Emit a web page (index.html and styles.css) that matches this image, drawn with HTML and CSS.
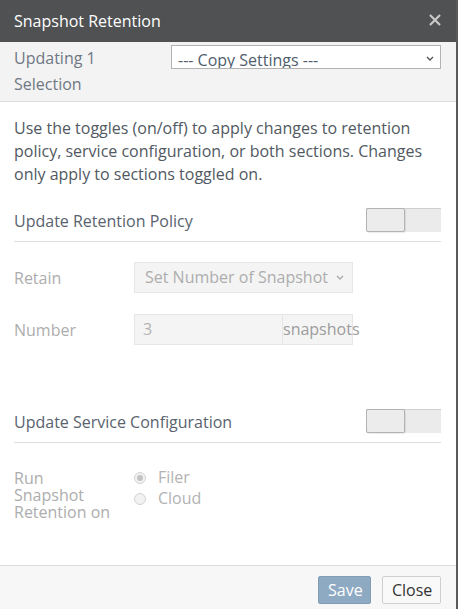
FILE: index.html
```html
<!DOCTYPE html>
<html>
	<head>
		<title>Snapshot Retention</title>
		<link rel="stylesheet" href="styles.css">
	</head>
	<body>
	<div class="dialog">
		<div class="dialog-header">
			<span class="dialog-title">Snapshot Retention</span>
			<svg class="close-x" width="12" height="12" viewBox="0 0 12 12">
				<path d="M1 1 L11 11 M11 1 L1 11" stroke="#c9c9c9" stroke-width="2.2" fill="none"/>
			</svg>
		</div>
		<div class="sub-header">
			<div class="updating">Updating 1<br>Selection</div>
			<div class="select copy-select">
				<span>--- Copy Settings ---</span>
				<svg class="chevron" width="8" height="5" viewBox="0 0 8 5">
					<path d="M1 1 L4 4 L7 1" stroke="#555" stroke-width="1.4" fill="none"/>
				</svg>
			</div>
		</div>
		<div class="dialog-body">
			<p class="intro">Use the toggles (on/off) to apply changes to retention policy, service configuration, or both sections. Changes only apply to sections toggled on.</p>

			<div class="section-head">
				<span>Update Retention Policy</span>
				<div class="toggle"><div class="knob"></div></div>
			</div>
			<div class="form-row">
				<label>Retain</label>
				<div class="select field-select">
					<span>Set Number of Snapshot</span>
					<svg class="chevron" width="8" height="5" viewBox="0 0 8 5">
						<path d="M1 1 L4 4 L7 1" stroke="#aaa" stroke-width="1.4" fill="none"/>
					</svg>
				</div>
			</div>
			<div class="form-row">
				<label>Number</label>
				<div class="input-group">
					<div class="num-input">3</div>
					<div class="addon">snapshots</div>
				</div>
			</div>

			<div class="section-head service">
				<span>Update Service Configuration</span>
				<div class="toggle"><div class="knob"></div></div>
			</div>
			<div class="radio-row">
				<label class="run-label">Run<br>Snapshot<br>Retention on</label>
				<div class="radios">
					<div class="radio-opt"><span class="radio checked"></span>Filer</div>
					<div class="radio-opt"><span class="radio"></span>Cloud</div>
				</div>
			</div>
		</div>
		<div class="dialog-footer">
			<button class="btn btn-save">Save</button>
			<button class="btn btn-close">Close</button>
		</div>
	</div>
	</body>
</html>
```
FILE: styles.css
```css
body{
	margin:0;
	font-family:"Open Sans", "Liberation Sans", sans-serif;
	background:#fff;
}
.dialog{
	width:456px;
	height:609px;
	display:flex;
	flex-direction:column;
	border-right:2px solid #5a5a5a;
}
.dialog-header{
	height:42px;
	flex:none;
	background:#505153;
	display:flex;
	align-items:center;
	justify-content:space-between;
	padding:0 15px 0 14px;
}
.dialog-title{
	color:#fff;
	font-size:16px;
}
.close-x{
	margin-top:-2px;
}
.sub-header{
	flex:none;
	background:#f3f3f3;
	border-bottom:1px solid #dcdcdc;
	display:grid;
	grid-template-columns:1fr 270px;
	padding:3px 15px 4px 14px;
}
.updating{
	font-size:16px;
	line-height:26px;
	color:#6f7883;
}
.select{
	position:relative;
	box-sizing:border-box;
	overflow:hidden;
	white-space:nowrap;
	font-size:16px;
}
.chevron{
	position:absolute;
	top:50%;
	margin-top:-3px;
}
.copy-select{
	height:24px;
	background:#fff;
	border:1px solid #b3b3b3;
	padding:4px 0 0 6px;
	line-height:20px;
	color:#4f5d6c;
}
.copy-select .chevron{
	right:6px;
	top:13px;
}
.dialog-body{
	flex:1;
	padding:0 15px 0 14px;
}
.intro{
	margin:15px 0 0;
	font-size:16px;
	line-height:23px;
	color:#515962;
}
.section-head{
	display:flex;
	justify-content:space-between;
	align-items:center;
	margin-top:22px;
	padding-bottom:9px;
	border-bottom:1px solid #dedede;
	font-size:16px;
	color:#59636f;
}
.section-head span{
	padding-top:2px;
}
.section-head.service{
	margin-top:64px;
}
.toggle{
	width:75px;
	height:24px;
	box-sizing:border-box;
	background:#ebebeb;
	border-top:1px solid #cfcfcf;
	position:relative;
}
.knob{
	width:39px;
	height:24px;
	box-sizing:border-box;
	margin-top:-1px;
	background:#ececec;
	border:1px solid #b3b3b3;
	border-radius:2px;
	box-shadow:1px 1px 1px rgba(0,0,0,0.08);
}
.form-row{
	display:flex;
	align-items:center;
	margin-top:20px;
	font-size:16px;
}
.form-row + .form-row{
	margin-top:21px;
}
.form-row label,
.run-label{
	width:120px;
	flex:none;
	color:#adadad;
}
.field-select{
	width:219px;
	height:31px;
	background:#f4f4f4;
	border:1px solid #e6e6e6;
	padding-left:10px;
	line-height:29px;
	color:#adadad;
}
.field-select .chevron{
	right:8px;
}
.input-group{
	display:flex;
	height:31px;
	width:219px;
}
.num-input{
	width:149px;
	box-sizing:border-box;
	background:#f4f4f4;
	border:1px solid #e6e6e6;
	padding-left:8px;
	line-height:29px;
	color:#b2b2b2;
}
.addon{
	width:70px;
	box-sizing:border-box;
	background:#f4f4f4;
	border:1px solid #e6e6e6;
	border-left:none;
	line-height:29px;
	color:#9c9c9c;
	white-space:nowrap;
}
.radio-row{
	display:flex;
	margin-top:27px;
	font-size:16px;
}
.run-label{
	line-height:17px;
}
.radios{
	margin-top:-3px;
}
.radio-opt{
	display:flex;
	align-items:center;
	line-height:21px;
	color:#b3b3b3;
}
.radio{
	width:12px;
	height:12px;
	box-sizing:border-box;
	border-radius:50%;
	border:1px solid #d3d3d3;
	background:#f2f2f2;
	margin-right:12px;
	position:relative;
}
.radio.checked::after{
	content:"";
	position:absolute;
	left:2px;
	top:2px;
	width:6px;
	height:6px;
	border-radius:50%;
	background:#c2c2c2;
}
.dialog-footer{
	flex:none;
	background:#f7f7f7;
	border-top:1px solid #dcdcdc;
	display:flex;
	justify-content:flex-end;
	align-items:flex-start;
	gap:11px;
	padding:10px 15px 0 0;
	height:33px;
}
.btn{
	font-family:"Open Sans", "Liberation Sans", sans-serif;
	font-size:16px;
	height:28px;
	padding:0 9px;
	border-radius:2px;
	line-height:24px;
}
.btn-save{
	width:53px;
	background:#8eaac2;
	border:1px solid #829eb7;
	color:#fff;
}
.btn-close{
	width:59px;
	background:#f9f9f9;
	border:1px solid #cfcfcf;
	color:#333;
}
```
